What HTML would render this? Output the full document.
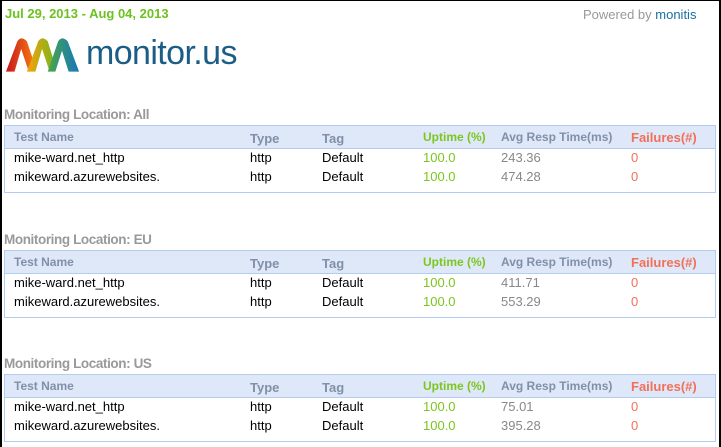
<!DOCTYPE html>
<html><head><meta charset="utf-8"><style>
*{margin:0;padding:0;box-sizing:border-box}
html,body{width:721px;height:447px;overflow:hidden}
body{background:#fff;font-family:"Liberation Sans",Arial,sans-serif;position:relative}
.frame{position:absolute;left:0;top:0;width:721px;height:447px;border-left:2px solid #000;border-top:1px solid #000;border-right:2px solid #000}
.abs{position:absolute;white-space:nowrap}
.date{left:5px;top:6px;font-size:13px;font-weight:bold;color:#6cc21e}
.pw{left:583px;top:7px;font-size:13px;color:#999}
.pw b{font-weight:normal;color:#1a6fa0}
.h{font-size:13.5px;font-weight:bold;color:#999;left:4px;letter-spacing:-0.4px}
.box{position:absolute;left:4px;width:712px;height:68px;border:1px solid #b3cdf0}
.hd{position:absolute;left:0;top:0;width:100%;height:23px;background:#dfe8f8;border-bottom:1px solid #b3cdf0}
.c{position:absolute;font-size:13px;white-space:nowrap}
.th{font-weight:bold;color:#8090a8;font-size:12px}
</style></head><body>
<div class="frame"></div>
<div class="abs date">Jul 29, 2013 - Aug 04, 2013</div>
<div class="abs pw">Powered by <b>monitis</b></div>
<svg class="abs" style="left:6px;top:37px" width="74" height="37" viewBox="0 0 78 38">
<defs>
<linearGradient id="g1" x1="0" x2="1"><stop offset="0" stop-color="#c8141e"/><stop offset="1" stop-color="#f57a10"/></linearGradient>
<linearGradient id="g2" x1="0" x2="1"><stop offset="0" stop-color="#f7a20c"/><stop offset="1" stop-color="#7ab51d"/></linearGradient>
<linearGradient id="g3" x1="0" x2="1"><stop offset="0" stop-color="#4aa64a"/><stop offset="1" stop-color="#1677bb"/></linearGradient>
</defs>
<path d="M0 36 L12 4 Q16 -2 22 4 L30 28 L24 36 L16 12 L9 36Z" fill="url(#g1)"/>
<path d="M22 36 L34 4 Q38 -2 44 4 L52 30 L46 36 L38 12 L31 36Z" fill="url(#g2)"/>
<path d="M44 36 L55 4 Q59 -2 65 4 L77 36 L66 36 L59 14 L52 36Z" fill="url(#g3)"/>
</svg>
<div class="abs" style="left:86px;top:34px;font-size:34px;color:#1b5e85;letter-spacing:-0.6px">monitor.us</div>

<div class="abs h" style="top:107px">Monitoring Location: All</div>
<div class="box" style="top:125px"><div class="hd"></div>
<div class="c th" style="left:9px;top:4px">Test Name</div>
<div class="c th" style="left:245px;top:5px;font-size:13px">Type</div>
<div class="c th" style="left:317px;top:5px;font-size:13px">Tag</div>
<div class="c th" style="left:418px;top:4px;color:#7cc61e">Uptime (%)</div>
<div class="c th" style="left:496px;top:4px">Avg Resp Time(ms)</div>
<div class="c th" style="left:626px;top:4px;color:#f2705a;font-size:13px">Failures(#)</div>
<div class="c" style="left:9px;top:24px">mike-ward.net_http</div><div class="c" style="left:245px;top:24px">http</div><div class="c" style="left:317px;top:24px">Default</div><div class="c" style="left:418px;top:24px;color:#7cc61e">100.0</div><div class="c" style="left:496px;top:24px;color:#888">243.36</div><div class="c" style="left:626px;top:24px;color:#f2705a">0</div>
<div class="c" style="left:9px;top:43px">mikeward.azurewebsites.</div><div class="c" style="left:245px;top:43px">http</div><div class="c" style="left:317px;top:43px">Default</div><div class="c" style="left:418px;top:43px;color:#7cc61e">100.0</div><div class="c" style="left:496px;top:43px;color:#888">474.28</div><div class="c" style="left:626px;top:43px;color:#f2705a">0</div>
</div>

<div class="abs h" style="top:232px">Monitoring Location: EU</div>
<div class="box" style="top:250px"><div class="hd"></div>
<div class="c th" style="left:9px;top:4px">Test Name</div>
<div class="c th" style="left:245px;top:5px;font-size:13px">Type</div>
<div class="c th" style="left:317px;top:5px;font-size:13px">Tag</div>
<div class="c th" style="left:418px;top:4px;color:#7cc61e">Uptime (%)</div>
<div class="c th" style="left:496px;top:4px">Avg Resp Time(ms)</div>
<div class="c th" style="left:626px;top:4px;color:#f2705a;font-size:13px">Failures(#)</div>
<div class="c" style="left:9px;top:24px">mike-ward.net_http</div><div class="c" style="left:245px;top:24px">http</div><div class="c" style="left:317px;top:24px">Default</div><div class="c" style="left:418px;top:24px;color:#7cc61e">100.0</div><div class="c" style="left:496px;top:24px;color:#888">411.71</div><div class="c" style="left:626px;top:24px;color:#f2705a">0</div>
<div class="c" style="left:9px;top:43px">mikeward.azurewebsites.</div><div class="c" style="left:245px;top:43px">http</div><div class="c" style="left:317px;top:43px">Default</div><div class="c" style="left:418px;top:43px;color:#7cc61e">100.0</div><div class="c" style="left:496px;top:43px;color:#888">553.29</div><div class="c" style="left:626px;top:43px;color:#f2705a">0</div>
</div>

<div class="abs h" style="top:356px">Monitoring Location: US</div>
<div class="box" style="top:374px"><div class="hd"></div>
<div class="c th" style="left:9px;top:4px">Test Name</div>
<div class="c th" style="left:245px;top:5px;font-size:13px">Type</div>
<div class="c th" style="left:317px;top:5px;font-size:13px">Tag</div>
<div class="c th" style="left:418px;top:4px;color:#7cc61e">Uptime (%)</div>
<div class="c th" style="left:496px;top:4px">Avg Resp Time(ms)</div>
<div class="c th" style="left:626px;top:4px;color:#f2705a;font-size:13px">Failures(#)</div>
<div class="c" style="left:9px;top:24px">mike-ward.net_http</div><div class="c" style="left:245px;top:24px">http</div><div class="c" style="left:317px;top:24px">Default</div><div class="c" style="left:418px;top:24px;color:#7cc61e">100.0</div><div class="c" style="left:496px;top:24px;color:#888">75.01</div><div class="c" style="left:626px;top:24px;color:#f2705a">0</div>
<div class="c" style="left:9px;top:43px">mikeward.azurewebsites.</div><div class="c" style="left:245px;top:43px">http</div><div class="c" style="left:317px;top:43px">Default</div><div class="c" style="left:418px;top:43px;color:#7cc61e">100.0</div><div class="c" style="left:496px;top:43px;color:#888">395.28</div><div class="c" style="left:626px;top:43px;color:#f2705a">0</div>
</div>
</body></html>
